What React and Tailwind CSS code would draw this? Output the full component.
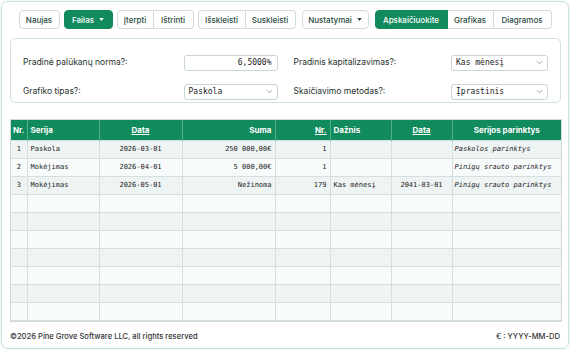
import React from 'react';

const font = { fontFamily: 'Inter, "Noto Sans", sans-serif' };

const Caret = () => (
  <svg width="5" height="3" viewBox="0 0 6 4" className="ml-[5px]">
    <path d="M0 0h6L3 4z" fill="currentColor" />
  </svg>
);

const Chevron = () => (
  <svg width="7" height="5" viewBox="0 0 8 5" className="text-[#8a9a96]">
    <path d="M1 1l3 3 3-3" fill="none" stroke="currentColor" strokeWidth="1" />
  </svg>
);

const Btn = ({ children, active, caret, w, cls = '' }) => (
  <button
    className={`${w} h-[19px] flex items-center justify-center text-[8px] font-medium border ${
      active ? 'bg-[#118a5d] border-[#118a5d] text-white' : 'bg-white border-[#d3dcd9] text-[#2b4a41]'
    } ${cls}`}
  >
    {children}
    {caret && <Caret />}
  </button>
);

const Select = ({ value, w = 'w-[97px]' }) => (
  <div className={`${w} h-[16px] border border-[#c7d6d1] rounded-[3px] bg-white flex items-center justify-between px-[4px]`}>
    <span className="font-['DejaVu_Sans_Mono',monospace] text-[8px] text-[#222]">{value}</span>
    <Chevron />
  </div>
);

const rows = [
  ['1', 'Paskola', '2026-03-01', '250 000,00€', '1', '', '', 'Paskolos parinktys'],
  ['2', 'Mokėjimas', '2026-04-01', '5 000,00€', '1', '', '', 'Pinigų srauto parinktys'],
  ['3', 'Mokėjimas', '2026-05-01', 'Nežinoma', '179', 'Kas mėnesį', '2041-03-01', 'Pinigų srauto parinktys'],
];

const widths = [16, 72, 83, 93, 55, 61, 61, 109];

export default function App() {
  const body = [...rows, ...Array(7).fill(['', '', '', '', '', '', '', ''])];
  return (
    <div className="w-[570px] h-[351px] bg-white p-[1px]" style={font}>
      <div className="h-[348px] border border-[#c4e6d9] rounded-[7px] shadow-[0_0_2px_rgba(0,80,50,0.15)] px-[8px] pt-[8px] flex flex-col">
        {/* toolbar */}
        <div className="flex items-center justify-center">
          <Btn w="w-[41px]" cls="rounded-[4px]">Naujas</Btn>
          <Btn w="w-[49px]" active caret cls="rounded-[4px] ml-[4px]">Failas</Btn>
          <div className="flex ml-[4px]">
            <Btn w="w-[37px]" cls="rounded-l-[4px]">Įterpti</Btn>
            <Btn w="w-[40px]" cls="rounded-r-[4px] border-l-0">Ištrinti</Btn>
          </div>
          <div className="flex ml-[4px]">
            <Btn w="w-[48px]" cls="rounded-l-[4px]">Išskleisti</Btn>
            <Btn w="w-[50px]" cls="rounded-r-[4px] border-l-0">Suskleisti</Btn>
          </div>
          <Btn w="w-[67px]" caret cls="rounded-[4px] ml-[6px]">Nustatymai</Btn>
          <div className="flex ml-[6px]">
            <Btn w="w-[73px]" active cls="rounded-l-[4px]">Apskaičiuokite</Btn>
            <Btn w="w-[46px]" cls="border-l-0">Grafikas</Btn>
            <Btn w="w-[58px]" cls="rounded-r-[4px] border-l-0">Diagramos</Btn>
          </div>
        </div>

        {/* settings */}
        <div className="mt-[9px] w-[551px] h-[65px] border border-[#cfe3dc] rounded-[5px] pt-[13px] pl-[12px] pr-[12px] grid grid-cols-2 gap-x-[16px] gap-y-[8px] text-[8.5px] text-[#26312e]">
          <div className="flex items-center justify-between">
            <span>Pradinė palūkanų norma?:</span>
            <div className="w-[94px] h-[16px] border border-[#c7d6d1] rounded-[3px] flex items-center justify-end px-[5px] font-['DejaVu_Sans_Mono',monospace] text-[8px] text-[#222]">
              6,5000%
            </div>
          </div>
          <div className="flex items-center justify-between">
            <span>Pradinis kapitalizavimas?:</span>
            <Select value="Kas mėnesį" />
          </div>
          <div className="flex items-center justify-between">
            <span>Grafiko tipas?:</span>
            <Select value="Paskola" w="w-[94px]" />
          </div>
          <div className="flex items-center justify-between">
            <span>Skaičiavimo metodas?:</span>
            <Select value="Įprastinis" />
          </div>
        </div>

        {/* table */}
        <div className="mt-[16px] w-[552px] border border-[#cfd9d6] overflow-hidden">
          <table className="table-fixed border-collapse w-full">
            <colgroup>
              {widths.map((w, i) => (
                <col key={i} style={{ width: w }} />
              ))}
            </colgroup>
            <thead>
              <tr className="h-[20px] bg-[#118a5d] text-white text-[8px] font-semibold">
                <th className="border-r border-[#4fb08a] text-left px-[2px]">Nr.</th>
                <th className="border-r border-[#4fb08a] text-left px-[3px]">Serija</th>
                <th className="border-r border-[#4fb08a] text-center underline">Data</th>
                <th className="border-r border-[#4fb08a] text-right px-[3px]">Suma</th>
                <th className="border-r border-[#4fb08a] text-right px-[3px] underline">Nr.</th>
                <th className="border-r border-[#4fb08a] text-left px-[3px]">Dažnis</th>
                <th className="border-r border-[#4fb08a] text-center underline">Data</th>
                <th className="text-center">Serijos parinktys</th>
              </tr>
            </thead>
            <tbody className="font-['DejaVu_Sans_Mono',monospace] text-[7px] text-[#222]">
              {body.map((r, i) => (
                <tr key={i} className={`h-[18px] ${i % 2 === 0 ? 'bg-[#eef4f3]' : 'bg-[#f8fbfb]'}`}>
                  <td className="border border-[#d6dfdd] border-l-0 text-center">{r[0]}</td>
                  <td className="border border-[#d6dfdd] px-[3px]">{r[1]}</td>
                  <td className="border border-[#d6dfdd] text-center">{r[2]}</td>
                  <td className="border border-[#d6dfdd] text-right px-[3px]">{r[3]}</td>
                  <td className="border border-[#d6dfdd] text-right px-[3px]">{r[4]}</td>
                  <td className="border border-[#d6dfdd] px-[3px]">{r[5]}</td>
                  <td className="border border-[#d6dfdd] text-center">{r[6]}</td>
                  <td className="border border-[#d6dfdd] border-r-0 px-[2px] italic whitespace-nowrap overflow-hidden">{r[7]}</td>
                </tr>
              ))}
            </tbody>
          </table>
        </div>

        {/* footer */}
        <div className="flex-1 pt-[3px] flex items-center justify-between text-[7.6px] font-medium text-[#333]">
          <span>©2026 Pine Grove Software LLC, all rights reserved</span>
          <span>€ : YYYY-MM-DD</span>
        </div>
      </div>
    </div>
  );
}
